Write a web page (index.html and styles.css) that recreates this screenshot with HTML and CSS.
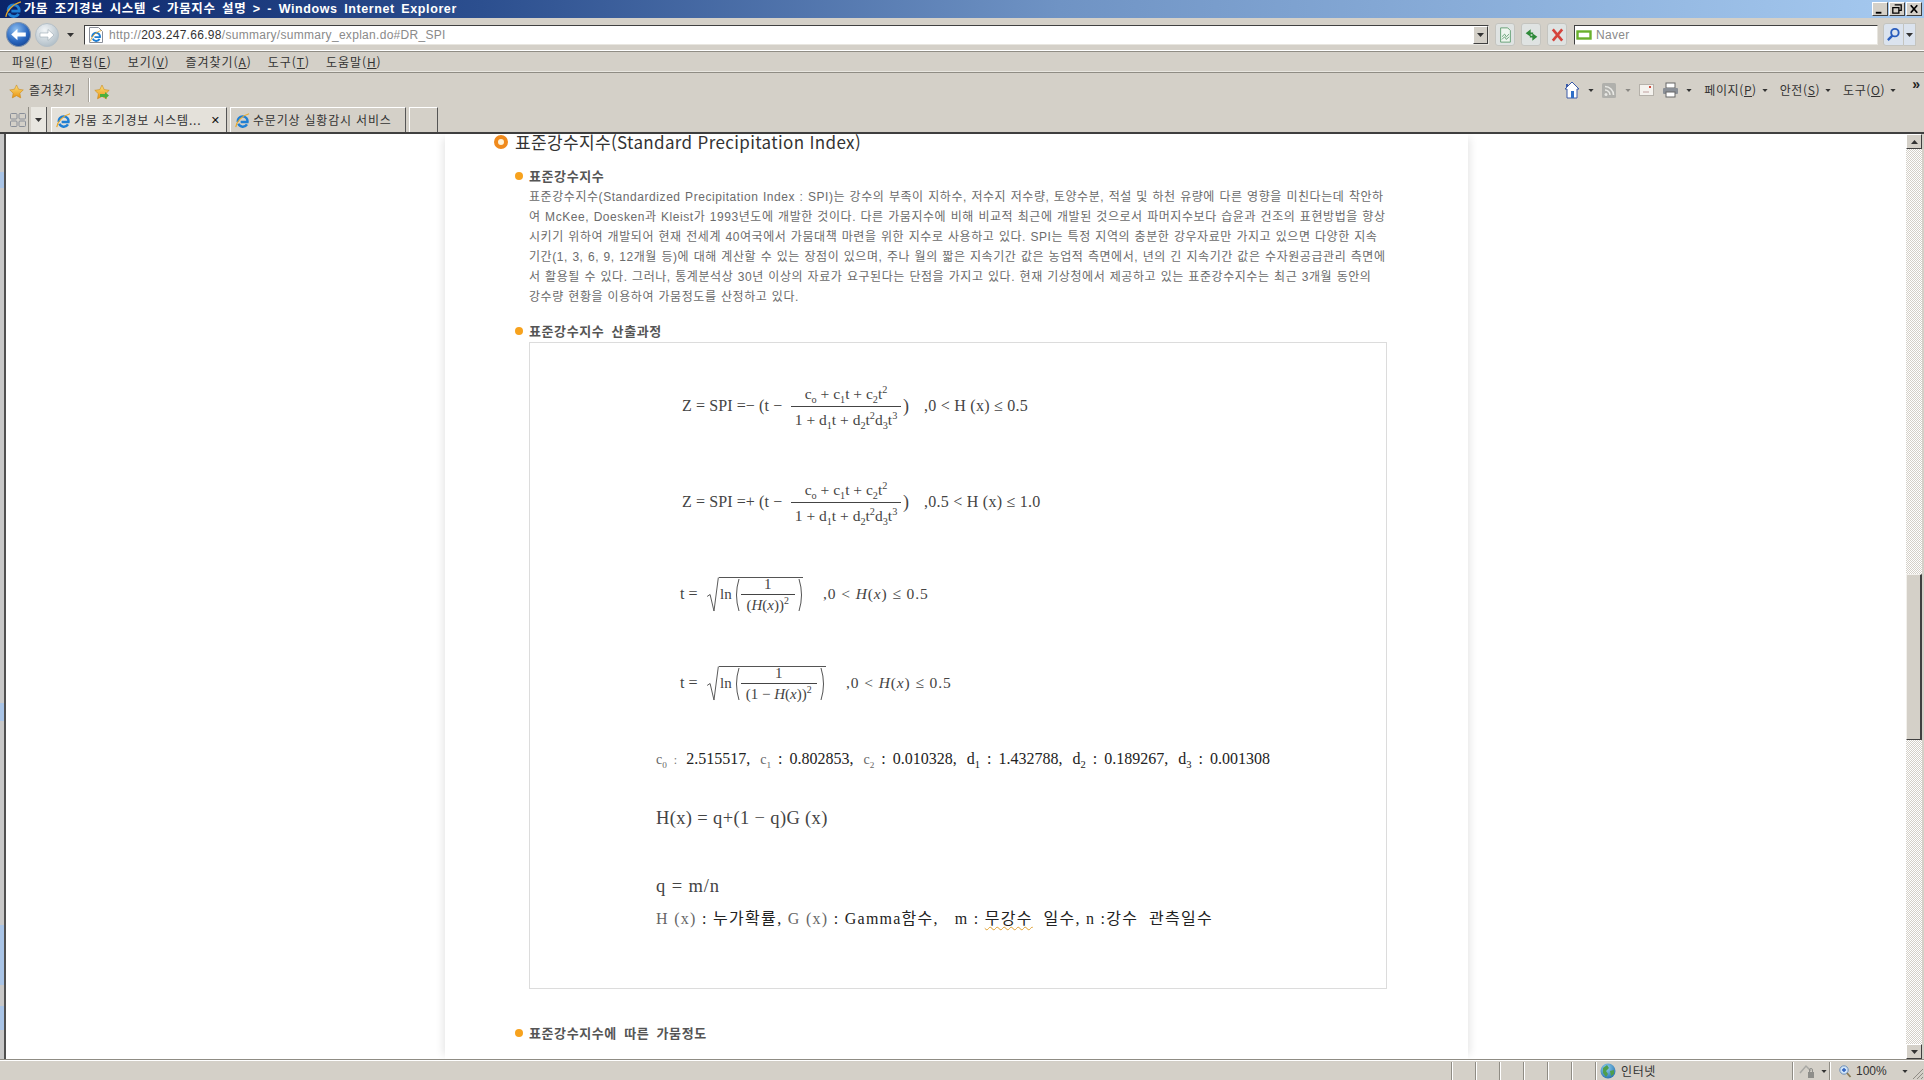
FILE: index.html
```html
<!DOCTYPE html>
<html lang="ko">
<head>
<meta charset="utf-8">
<title>가뭄 조기경보 시스템 &lt; 가뭄지수 설명 &gt; - Windows Internet Explorer</title>
<link rel="stylesheet" href="styles.css">
</head>
<body>
<svg class="defs" width="0" height="0" aria-hidden="true">
  <defs>
    <linearGradient id="gStar" x1="0" y1="0" x2="0" y2="1"><stop offset="0" stop-color="#ffe27a"/><stop offset="1" stop-color="#e8920f"/></linearGradient>
    <radialGradient id="gBack" cx=".4" cy=".3" r=".8"><stop offset="0" stop-color="#8fc0f0"/><stop offset=".6" stop-color="#2a68c0"/><stop offset="1" stop-color="#123f8c"/></radialGradient>
    <radialGradient id="gFwd" cx=".4" cy=".3" r=".8"><stop offset="0" stop-color="#f2f5f7"/><stop offset="1" stop-color="#a9b8c2"/></radialGradient>
    <radialGradient id="gGlobe" cx=".4" cy=".3" r=".8"><stop offset="0" stop-color="#8fd0f0"/><stop offset="1" stop-color="#1f6aa8"/></radialGradient>
    <symbol id="ie" viewBox="0 0 16 16">
      <path d="M3 9.500a5.200 5.200 0 1 1 10.300 0H6M3.600 11.500a5.200 5.200 0 0 0 9.200.6" fill="none" stroke="#1f7fd4" stroke-width="2.600"/>
      <path d="M.8 15C1.500 9 8 2.500 15 .8" fill="none" stroke="#e8a92a" stroke-width="1.200"/>
    </symbol>
    <symbol id="star" viewBox="0 0 16 16">
      <path d="M8 1l2.200 4.600 5 .7-3.600 3.500.9 5L8 12.400l-4.500 2.400.9-5L.8 6.300l5-.7z" fill="url(#gStar)" stroke="#c98a1a" stroke-width=".6"/>
    </symbol>
    <symbol id="caret" viewBox="0 0 7 4"><path d="M0 0h7L3.500 4z" fill="#333"/></symbol>
  </defs>
</svg>

<div class="window">
  <header class="titlebar">
    <svg class="ico-title"><use href="#ie"/></svg>
    <span class="title-text">가뭄 조기경보 시스템 &lt; 가뭄지수 설명 &gt; - Windows Internet Explorer</span>
    <div class="win-btns">
      <span class="win-btn"><svg viewBox="0 0 15 12"><path d="M3 9h6v2H3z" fill="#000"/></svg></span>
      <span class="win-btn"><svg viewBox="0 0 15 12"><path d="M5 1.500h7v6h-2M3 4.500h6.500v6H3z" fill="none" stroke="#000" stroke-width="1.400"/></svg></span>
      <span class="win-btn"><svg viewBox="0 0 15 12"><path d="M4 2l7 8M11 2l-7 8" stroke="#000" stroke-width="1.800"/></svg></span>
    </div>
  </header>

  <div class="addressrow">
    <svg class="nav-btn" viewBox="0 0 24 24"><circle cx="12" cy="12" r="11.500" fill="url(#gBack)" stroke="#7f93ad"/><path d="M5 12l6-5.500V10h8v4h-8v3.500z" fill="#fff"/></svg>
    <svg class="nav-btn nav-fwd" viewBox="0 0 24 24"><circle cx="12" cy="12" r="11.500" fill="url(#gFwd)" stroke="#b5bfc6"/><path d="M19 12l-6-5.500V10H5v4h8v3.500z" fill="#fff" stroke="#9aa8b2" stroke-width=".6"/></svg>
    <svg class="nav-caret"><use href="#caret"/></svg>
    <div class="addressbox">
      <svg class="ico-page" viewBox="0 0 14 16"><path d="M.5.5h9l4 4v11H.5z" fill="#fff" stroke="#8a8f99"/><use href="#ie" x="1" y="3" width="12" height="12"/></svg>
      <span class="url"><span class="url-dim">http://</span>203.247.66.98<span class="url-dim">/summary/summary_explan.do#DR_SPI</span></span>
      <span class="combo-btn"><svg class="combo-caret"><use href="#caret"/></svg></span>
    </div>
    <span class="tool-btn"><svg viewBox="0 0 16 18"><path d="M2.500 1h8l3 3v13h-11z" fill="#eef5ee" stroke="#5d9c6d"/><path d="M4 11l3-3 2 3 3-3M4 14l3-3 2 3 3-3" fill="none" stroke="#5d9c6d"/></svg></span>
    <span class="tool-btn"><svg viewBox="0 0 18 18"><path d="M8 2L2 7l6 4V8h3V6H8zM10 16l6-5-6-4v3H7v2h3z" fill="#2f8a3a"/></svg></span>
    <span class="tool-btn"><svg viewBox="0 0 16 16"><path d="M3 2l10 12M13 2L3 14" stroke="#d5443c" stroke-width="2.800"/></svg></span>
    <div class="searchbox">
      <svg class="ico-naver" viewBox="0 0 16 12"><rect x="1.500" y="2.500" width="13" height="7" fill="#fff" stroke="#6ab02c" stroke-width="2.400"/></svg>
      <span class="search-text">Naver</span>
    </div>
    <span class="search-btn"><svg viewBox="0 0 16 16"><circle cx="9.500" cy="6" r="4" fill="none" stroke="#2a5dbd" stroke-width="2"/><path d="M7 9l-5 5" stroke="#2a5dbd" stroke-width="2.500"/></svg></span>
    <span class="search-drop"><svg class="combo-caret"><use href="#caret"/></svg></span>
  </div>

  <nav class="menubar">
    <span>파일(<u>F</u>)</span><span>편집(<u>E</u>)</span><span>보기(<u>V</u>)</span><span>즐겨찾기(<u>A</u>)</span><span>도구(<u>T</u>)</span><span>도움말(<u>H</u>)</span>
  </nav>

  <div class="favrow">
    <svg class="ico-star"><use href="#star"/></svg>
    <span class="fav-label">즐겨찾기</span>
    <span class="fav-sep"></span>
    <svg class="ico-star2" viewBox="0 0 16 16"><use href="#star"/><path d="M6 10h5V8l4 3.500-4 3.500v-2H6z" fill="#4caf3c"/></svg>
    <div class="cmdbar">
      <svg class="cmd-home" viewBox="0 0 16 18"><path d="M8 1L1 8h2v9h10V8h2z" fill="#fff" stroke="#3a5aa8"/><path d="M3 3v3" stroke="#3a5aa8" stroke-width="2"/><rect x="7" y="10" width="3" height="7" fill="#2f6fc8"/></svg>
      <svg class="c1"><use href="#caret"/></svg>
      <svg class="cmd-rss" viewBox="0 0 14 15"><rect width="14" height="15" rx="1.500" fill="#b0b0ac"/><circle cx="4" cy="11.500" r="1.500" fill="#e8e8e4"/><path d="M3 7a5 5 0 0 1 5 5M3 3.500a8.500 8.500 0 0 1 8.500 8.500" fill="none" stroke="#e8e8e4" stroke-width="1.600"/></svg>
      <svg class="c2"><use href="#caret"/></svg>
      <svg class="cmd-mail" viewBox="0 0 15 12"><rect x=".5" y=".5" width="14" height="11" fill="#f4f2ee" stroke="#b5b1aa"/><path d="M4 8h6" stroke="#c0a0a0"/><rect x="10" y="2" width="2" height="2" fill="#d04a3a"/></svg>
      <svg class="cmd-print" viewBox="0 0 17 16"><rect x="4" y="1" width="9" height="5" fill="#fff" stroke="#666"/><rect x="1" y="6" width="15" height="6" rx="1" fill="#8a8f96"/><rect x="4" y="10" width="9" height="5" fill="#fff" stroke="#666"/></svg>
      <svg class="c3"><use href="#caret"/></svg>
      <span class="cmd-text">페이지(<u>P</u>)</span><svg class="c4"><use href="#caret"/></svg>
      <span class="cmd-text">안전(<u>S</u>)</span><svg class="c4"><use href="#caret"/></svg>
      <span class="cmd-text">도구(<u>O</u>)</span><svg class="c4"><use href="#caret"/></svg>
    </div>
    <span class="chevron">»</span>
  </div>

  <div class="tabrow">
    <span class="quick"><svg viewBox="0 0 16 14"><g fill="none" stroke="#8a8f99"><rect x=".5" y=".5" width="6.500" height="5.500" rx="1"/><rect x="9" y=".5" width="6.500" height="5.500" rx="1"/><rect x=".5" y="8" width="6.500" height="5.500" rx="1"/><rect x="9" y="8" width="6.500" height="5.500" rx="1"/></g></svg></span>
    <span class="quick-drop"><svg class="combo-caret"><use href="#caret"/></svg></span>
    <div class="tab tab-active">
      <svg class="ico-tab"><use href="#ie"/></svg>
      <span class="tab-text">가뭄 조기경보 시스템...</span>
      <span class="tab-x">✕</span>
    </div>
    <div class="tab">
      <svg class="ico-tab"><use href="#ie"/></svg>
      <span class="tab-text">수문기상 실황감시 서비스</span>
    </div>
    <div class="tab tab-new"></div>
  </div>

  <div class="viewport">
    <div class="desk-strip">
      <i class="s1"></i><i class="b1"></i><i class="s2"></i><i class="b2"></i><i class="s3"></i><i class="b3"></i><i class="s4"></i><i class="b4"></i>
    </div>
    <main class="pagearea">
      <article class="column">
        <h1 class="main-head"><span class="ring"></span>표준강수지수(Standard Precipitation Index)</h1>
        <section class="sec sec-first">
          <h2 class="sub-head">표준강수지수</h2>
          <p class="para">표준강수지수(Standardized Precipitation Index : SPI)는 강수의 부족이 지하수, 저수지 저수량, 토양수분, 적설 및 하천 유량에 다른 영향을 미친다는데 착안하<br>여 McKee, Doesken과 Kleist가 1993년도에 개발한 것이다. 다른 가뭄지수에 비해 비교적 최근에 개발된 것으로서 파머지수보다 습윤과 건조의 표현방법을 향상<br>시키기 위하여 개발되어 현재 전세계 40여국에서 가뭄대책 마련을 위한 지수로 사용하고 있다. SPI는 특정 지역의 충분한 강우자료만 가지고 있으면 다양한 지속<br>기간(1, 3, 6, 9, 12개월 등)에 대해 계산할 수 있는 장점이 있으며, 주나 월의 짧은 지속기간 값은 농업적 측면에서, 년의 긴 지속기간 값은 수자원공급관리 측면에<br>서 활용될 수 있다. 그러나, 통계분석상 30년 이상의 자료가 요구된다는 단점을 가지고 있다. 현재 기상청에서 제공하고 있는 표준강수지수는 최근 3개월 동안의<br>강수량 현황을 이용하여 가뭄정도를 산정하고 있다.</p>
        </section>
        <section class="sec sec-second">
          <h2 class="sub-head">표준강수지수 산출과정</h2>
          <div class="formula-box">
            <div class="row indent">
              <span class="lhs">Z = SPI =− (t −</span>
              <span class="frac frac-z"><span class="num">c<sub>o</sub> + c<sub>1</sub>t + c<sub>2</sub>t<sup>2</sup></span><span class="den">1 + d<sub>1</sub>t + d<sub>2</sub>t<sup>2</sup>d<sub>3</sub>t<sup>3</sup></span></span>
              <span class="close">)</span>
              <span class="cond">,0 &lt; H (x) ≤ 0.5</span>
            </div>
            <div class="row indent">
              <span class="lhs">Z = SPI =+ (t −</span>
              <span class="frac frac-z"><span class="num">c<sub>o</sub> + c<sub>1</sub>t + c<sub>2</sub>t<sup>2</sup></span><span class="den">1 + d<sub>1</sub>t + d<sub>2</sub>t<sup>2</sup>d<sub>3</sub>t<sup>3</sup></span></span>
              <span class="close">)</span>
              <span class="cond">,0.5 &lt; H (x) ≤ 1.0</span>
            </div>
            <div class="row indent">
              <span class="t-eq">t =</span>
              <svg class="radical" viewBox="0 0 12 36"><path d="M0 20l3-2 4 17L11.500 .5" fill="none" stroke="#555"/></svg>
              <span class="root root-a">
                <span class="ln">ln</span>
                <svg class="paren" viewBox="0 0 7 34"><path d="M6 1Q1 17 6 33" fill="none" stroke="#555"/></svg>
                <span class="frac frac-a"><span class="num">1</span><span class="den">(<i>H</i>(<i>x</i>))<sup>2</sup></span></span>
                <svg class="paren" viewBox="0 0 7 34"><path d="M1 1Q6 17 1 33" fill="none" stroke="#555"/></svg>
              </span>
              <span class="cond cond-a">,0 &lt; <i>H</i>(<i>x</i>) ≤ 0.5</span>
            </div>
            <div class="row indent">
              <span class="t-eq">t =</span>
              <svg class="radical" viewBox="0 0 12 36"><path d="M0 20l3-2 4 17L11.500 .5" fill="none" stroke="#555"/></svg>
              <span class="root root-b">
                <span class="ln">ln</span>
                <svg class="paren" viewBox="0 0 7 34"><path d="M6 1Q1 17 6 33" fill="none" stroke="#555"/></svg>
                <span class="frac frac-b"><span class="num">1</span><span class="den">(1 − <i>H</i>(<i>x</i>))<sup>2</sup></span></span>
                <svg class="paren" viewBox="0 0 7 34"><path d="M1 1Q6 17 1 33" fill="none" stroke="#555"/></svg>
              </span>
              <span class="cond cond-a">,0 &lt; <i>H</i>(<i>x</i>) ≤ 0.5</span>
            </div>
            <div class="row coef">
              <span class="pair"><span class="c-small">c<sub>0</sub></span><span class="colon-s">:</span>2.515517,</span>
              <span class="pair"><span class="c-small">c<sub>1</sub></span><span class="colon">:</span>0.802853,</span>
              <span class="pair"><span class="c-small">c<sub>2</sub></span><span class="colon">:</span>0.010328,</span>
              <span class="pair"><span class="key">d<sub>1</sub></span><span class="colon">:</span>1.432788,</span>
              <span class="pair"><span class="key">d<sub>2</sub></span><span class="colon">:</span>0.189267,</span>
              <span class="pair"><span class="key">d<sub>3</sub></span><span class="colon">:</span>0.001308</span>
            </div>
            <div class="row big">H(x) = q+(1 − q)G (x)</div>
            <div class="row big row-q">q = m/n</div>
            <div class="row legend"><span class="legend-line"><span class="dim">H (x)</span> : 누가확률, <span class="dim">G (x)</span> : <span class="latin">Gamma</span>함수,&nbsp;&nbsp; <span class="latin">m</span> : <span class="squiggle">무강수</span>&nbsp; 일수, <span class="latin">n</span> :강수&nbsp; 관측일수</span></div>
          </div>
        </section>
        <section class="sec sec-third">
          <h2 class="sub-head">표준강수지수에 따른 가뭄정도</h2>
        </section>
      </article>
    </main>
    <div class="scrollbar">
      <span class="sb-btn"><svg class="sb-up"><use href="#caret"/></svg></span>
      <span class="sb-track sb-upper"></span>
      <span class="sb-thumb"></span>
      <span class="sb-track sb-lower"></span>
      <span class="sb-btn"><svg class="combo-caret"><use href="#caret"/></svg></span>
    </div>
  </div>

  <footer class="statusbar">
    <span class="cell cell-main"></span>
    <span class="cell cell-s"></span><span class="cell cell-s"></span><span class="cell cell-s"></span><span class="cell cell-s"></span><span class="cell cell-s"></span><span class="cell cell-s"></span>
    <span class="cell cell-zone">
      <svg class="ico-globe" viewBox="0 0 16 16"><circle cx="8" cy="8" r="7.500" fill="url(#gGlobe)"/><path d="M3 5l4-3 2 3-3 3 2 3-2 3-3-4zM10 8l4-1 0 4-3 2z" fill="#4f9e4a"/></svg>
      <span class="zone-text">인터넷</span>
    </span>
    <span class="cell cell-lock">
      <svg class="ico-lock" viewBox="0 0 17 15"><path d="M1 9L7 2l5 5" fill="none" stroke="#a8a8a4" stroke-width="1.500"/><rect x="9" y="8" width="6" height="6" fill="#8e8e8a"/><path d="M10.500 8V6a1.500 1.500 0 0 1 3 0v2" fill="none" stroke="#8e8e8a"/></svg>
      <svg class="c5"><use href="#caret"/></svg>
    </span>
    <span class="cell cell-zoom">
      <svg class="ico-zoom" viewBox="0 0 12 13"><circle cx="5" cy="5" r="4.200" fill="#cfe3f7" stroke="#6f8fb5"/><path d="M3 5h4M5 3v4" stroke="#2a5dbd" stroke-width="1.400"/><path d="M8 8l3.500 4" stroke="#8a7a55" stroke-width="1.800"/></svg>
      <span class="zoom-text">100%</span>
      <svg class="c6"><use href="#caret"/></svg>
    </span>
    <svg class="grip" viewBox="0 0 14 14"><path d="M13 3L3 13M13 7l-6 6M13 11l-2 2" stroke="#8f8c84"/></svg>
  </footer>
</div>
</body>
</html>
```

FILE: styles.css
```css
* { box-sizing: border-box; }
html, body { margin: 0; padding: 0; }
body {
  width: 1924px;
  height: 1080px;
  overflow: hidden;
  background: #d4d0c8;
  font-family: "Noto Sans CJK KR", "Liberation Sans", sans-serif;
  font-size: 12px;
  color: #333;
}
.defs { position: absolute; }
svg { display: block; flex: none; overflow: visible; }

.window { display: flex; flex-direction: column; width: 1924px; height: 1080px; }

/* title bar */
.titlebar {
  height: 18px;
  display: flex;
  align-items: center;
  padding-left: 5px;
  background: linear-gradient(90deg, #0a246a 0%, #2c4f8f 25%, #6f93c4 55%, #a6caf0 100%);
  flex: none;
}
.ico-title { width: 17px; height: 17px; }
.title-text {
  margin-left: 2px;
  color: #fff;
  font: 700 12.500px/18px "Liberation Sans", "Noto Sans CJK KR", sans-serif;
  letter-spacing: .6px;
  word-spacing: 2.500px;
  white-space: nowrap;
}
.win-btns { margin-left: auto; margin-right: 2px; display: flex; gap: 1px; }
.win-btn {
  width: 16px;
  height: 14px;
  background: #d4d0c8;
  border: 1px solid;
  border-color: #fff #404040 #404040 #fff;
  display: block;
}
.win-btn svg { width: 14px; height: 12px; }

/* address row */
.addressrow {
  height: 34px;
  flex: none;
  display: flex;
  align-items: center;
  padding: 0 6px 0 6px;
  border-bottom: 1px solid #8f8c84;
  box-shadow: inset 0 -1px 0 #fff;
}
.nav-btn { width: 25px; height: 25px; }
.nav-fwd { margin-left: 4px; width: 24px; height: 24px; }
.nav-caret { width: 7px; height: 4px; margin-left: 8px; }
.addressbox {
  width: 1405px;
  height: 20px;
  margin-left: 10px;
  background: #fff;
  border: 1px solid;
  border-color: #404040 #e8e6e0 #e8e6e0 #404040;
  display: flex;
  align-items: center;
  padding-left: 4px;
}
.ico-page { width: 14px; height: 16px; }
.url {
  margin-left: 6px;
  font: 12px/18px "Liberation Sans", sans-serif;
  letter-spacing: .3px;
  color: #333;
}
.url-dim { color: #8a8a8a; }
.combo-btn {
  margin-left: auto;
  width: 15px;
  height: 18px;
  background: #d4d0c8;
  border: 1px solid;
  border-color: #fff #404040 #404040 #fff;
  display: flex;
  align-items: center;
  justify-content: center;
}
.combo-caret { width: 7px; height: 4px; }
.tool-btn {
  width: 20px;
  height: 23px;
  margin-left: 6px;
  background: #dfe3e2;
  border: 1px solid #c4c4bf;
  border-radius: 3px;
  display: flex;
  align-items: center;
  justify-content: center;
}
.tool-btn svg { width: 15px; height: 16px; }
.searchbox {
  width: 304px;
  height: 20px;
  margin-left: 7px;
  background: #fff;
  border: 1px solid;
  border-color: #404040 #e8e6e0 #e8e6e0 #404040;
  display: flex;
  align-items: center;
  padding-left: 1px;
}
.ico-naver { width: 16px; height: 12px; }
.search-text { margin-left: 4px; font: 12px "Liberation Sans", sans-serif; color: #8a8a8a; letter-spacing: .3px; }
.search-btn {
  width: 21px;
  height: 23px;
  margin-left: 5px;
  background: #dbe3ee;
  border: 1px solid #c4c4bf;
  border-radius: 3px 0 0 3px;
  display: flex;
  align-items: center;
  justify-content: center;
}
.search-btn svg { width: 15px; height: 15px; }
.search-drop {
  width: 12px;
  height: 23px;
  background: #dbe3ee;
  border: 1px solid #c4c4bf;
  border-left: 0;
  display: flex;
  align-items: center;
  justify-content: center;
}

/* menu */
.menubar {
  height: 21px;
  flex: none;
  display: flex;
  align-items: center;
  gap: 16px;
  padding-left: 12px;
  border-bottom: 1px solid #8f8c84;
  box-shadow: inset 0 -1px 0 #e8e6e0;
  line-height: 20px;
  letter-spacing: .95px;
  color: #333;
}

/* favourites row */
.favrow {
  height: 34px;
  flex: none;
  display: flex;
  align-items: flex-start;
  padding: 10px 4px 0 9px;
}
.ico-star { width: 15px; height: 15px; margin-top: 1px; }
.fav-label { margin-left: 5px; line-height: 14px; letter-spacing: .7px; }
.fav-sep { width: 2px; height: 24px; margin: -5px 0 0 12px; border-left: 1px solid #a8a49c; border-right: 1px solid #fff; }
.ico-star2 { width: 16px; height: 16px; margin: 1px 0 0 4px; }
.cmdbar { margin-left: auto; display: flex; align-items: center; height: 14px; }
.cmd-home { width: 16px; height: 18px; }
.cmdbar svg[class^="c"]:not([class^="cmd"]) { width: 6px; height: 3px; }
.c1 { margin-left: 8px; }
.cmd-rss { width: 14px; height: 15px; margin-left: 8px; }
.c2 { margin-left: 9px; opacity: .45; }
.cmd-mail { width: 15px; height: 12px; margin-left: 8px; }
.cmd-print { width: 17px; height: 16px; margin-left: 8px; }
.c3 { margin-left: 7px; }
.cmd-text { margin-left: 12px; line-height: 14px; letter-spacing: .6px; }
.c4 { margin-left: 5px; }
.chevron { margin: -6px 0 0 16px; font: 700 14px/14px "Liberation Sans", sans-serif; color: #222; }

/* tabs */
.tabrow {
  height: 25px;
  flex: none;
  display: flex;
  align-items: flex-end;
  padding-left: 8px;
}
.quick { width: 21px; height: 25px; display: flex; align-items: center; justify-content: center; border-right: 1px solid #8f8c84; }
.quick svg { width: 16px; height: 14px; }
.quick-drop { width: 16px; height: 25px; margin-left: 2px; display: flex; align-items: center; justify-content: center; background: #e8e6e0; border-right: 1px solid #555; }
.tab {
  width: 176px;
  height: 25px;
  margin-left: 4px;
  display: flex;
  align-items: center;
  padding-left: 4px;
  border: 1px solid;
  border-color: #fff #555 transparent #fff;
  border-bottom: 0;
}
.tab + .tab { margin-left: 3px; }
.tab-active { background: #e4e1da; }
.tab-new { width: 29px; }
.ico-tab { width: 15px; height: 15px; }
.tab-text { margin-left: 3px; line-height: 20px; white-space: nowrap; color: #333; letter-spacing: .8px; }
.tab-x { margin-left: auto; margin-right: 6px; font: 700 11px "DejaVu Sans", sans-serif; color: #111; }

/* page viewport */
.viewport {
  flex: 1;
  display: flex;
  min-height: 0;
  border-top: 2px solid #404040;
  padding-right: 2px;
}
.desk-strip {
  width: 6px;
  flex: none;
  border-right: 2px solid #505050;
  display: flex;
  flex-direction: column;
  background: #c8c8c8;
}
.desk-strip i { display: block; flex: none; }
.s1 { height: 38px; }
.b1 { height: 16px; background: #a9c4e6; }
.s2 { height: 515px; }
.b2 { height: 18px; background: #a9c4e6; }
.s3 { height: 204px; }
.b3 { height: 60px; background: #a9c4e6; }
.s4 { height: 21px; }
.b4 { height: 24px; background: #a9c4e6; }

.pagearea { flex: 1; min-width: 0; background: #fff; }
.column {
  width: 1023px;
  height: 100%;
  margin-left: 439px;
  background: #fff;
  box-shadow: -6px 0 8px -4px rgba(0,0,0,.1), 6px 0 8px -4px rgba(0,0,0,.1);
}
.main-head {
  margin: 0;
  height: 19px;
  display: flex;
  align-items: center;
  gap: 7px;
  padding: 0 0 3px 50px;
  font-size: 17px;
  font-weight: 400;
  line-height: 16px;
  letter-spacing: .35px;
  color: #333;
  white-space: nowrap;
}
.ring {
  width: 14px;
  height: 14px;
  border-radius: 50%;
  border: 4px solid #f08a1c;
  background: #fff3d8;
  flex: none;
  margin: -1px 0 0 -1px;
}
.sec { padding-left: 84px; }
.sec-first { margin-top: 13px; }
.sec-second { margin-top: 14px; }
.sec-third { margin-top: 34px; }
.sub-head {
  margin: 0 0 0 -14px;
  height: 20px;
  display: flex;
  align-items: center;
  gap: 6px;
  font-size: 13px;
  font-weight: 700;
  line-height: 18px;
  padding-bottom: 1px;
  letter-spacing: .6px;
  word-spacing: 3px;
  color: #555;
  white-space: nowrap;
}
.sub-head::before {
  content: "";
  width: 8px;
  height: 8px;
  border-radius: 50%;
  background: #f7a21d;
  flex: none;
}
.para {
  margin: 0;
  padding-top: 1px;
  font-family: "Liberation Sans", "Noto Sans CJK KR", sans-serif;
  font-size: 12px;
  line-height: 20px;
  letter-spacing: .56px;
  word-spacing: .6px;
  color: #6b6b6b;
  white-space: nowrap;
}

/* formula image */
.formula-box {
  margin-top: 1px;
  width: 858px;
  height: 647px;
  border: 1px solid #dcdcdc;
  padding: 15px 0 0 126px;
  display: grid;
  grid-template-rows: 96px 96px 88px 90px 62px 56px 58px 32px;
  font-family: "Liberation Serif", "Noto Sans CJK KR", serif;
  font-size: 16px;
  color: #444;
}
.row { display: flex; align-items: center; white-space: nowrap; }
.indent { margin-left: 26px; }
sub, sup { font-size: 66%; line-height: 0; }
.lhs { width: 109px; letter-spacing: .1px; }
.frac { display: inline-flex; flex-direction: column; align-items: center; flex: none; line-height: 21px; }
.num { display: block; width: 100%; text-align: center; border-bottom: 1px solid #444; padding-bottom: 2px; }
.den { display: block; width: 100%; text-align: center; padding-top: 2px; }
.frac-z { width: 110px; font-size: 15.500px; }
.close { margin-left: 2px; font-size: 18px; }
.cond { margin-left: 15px; letter-spacing: .25px; }
.t-eq { width: 27px; margin-left: -2px; }
.radical { width: 12px; height: 35px; }
.root {
  height: 35px;
  display: flex;
  align-items: center;
  border-top: 1px solid #555;
  font-size: 15px;
}
.root-a { width: 84px; }
.root-b { width: 107px; }
.paren { width: 7px; height: 34px; }
.ln { margin-left: 1px; margin-right: 1px; }
.frac-a { width: 54px; margin: 0 3px 0 1px; line-height: 16px; }
.frac-b { width: 76px; margin: 0 3px 0 1px; line-height: 16px; }
.cond-a { margin-left: 20px; font-size: 15.500px; letter-spacing: .9px; }
.coef { font-size: 16px; gap: 10px; color: #222; }
.pair { display: inline-flex; align-items: baseline; }
.key { font-size: 16px; }
.colon { margin: 0 7px; }
.colon-s { margin: 0 9px 0 7px; color: #777; font-size: 12px; }
.c-small { color: #666; font-size: 14px; }
.big { font-size: 18.500px; color: #444; letter-spacing: .35px; }
.row-q { padding-top: 22px; letter-spacing: .9px; }
.legend { font-size: 16px; color: #222; letter-spacing: 1.300px; padding-bottom: 6px; }
.latin { letter-spacing: 1.200px; }
.dim { color: #666; }
.squiggle { text-decoration: underline wavy #e0a030 1px; text-underline-offset: 2px; }

/* scrollbar */
.scrollbar { width: 16px; flex: none; display: flex; flex-direction: column; background: #fff; }
.sb-btn {
  height: 15px;
  flex: none;
  background: #d4d0c8;
  border: 1px solid;
  border-color: #fff #404040 #404040 #fff;
  display: flex;
  align-items: center;
  justify-content: center;
}
.sb-up { width: 7px; height: 4px; transform: rotate(180deg); }
.sb-track {
  display: block;
  background: repeating-conic-gradient(#d4d0c8 0 25%, #fff 0 50%) 0 0 / 2px 2px;
}
.sb-upper { height: 425px; flex: none; margin-top: 0; }
.sb-thumb {
  height: 166px;
  flex: none;
  background: #d4d0c8;
  border: 1px solid;
  border-color: #f2f0ec #404040 #404040 #f2f0ec;
  border-right-width: 2px;
}
.sb-lower { flex: 1; }

/* status bar */
.statusbar {
  height: 21px;
  flex: none;
  display: flex;
  align-items: stretch;
  border-top: 1px solid #8f8c84;
  box-shadow: inset 0 1px 0 #fff;
  padding: 2px 0 0 6px;
  line-height: 18px;
}
.cell { display: flex; align-items: center; flex: none; border-right: 1px solid #8f8c84; box-shadow: 1px 0 0 #fff; }
.cell-main { width: 1446px; }
.cell-s { width: 24px; }
.cell-zone { width: 197px; padding-left: 4px; gap: 5px; color: #333; font-size: 12px; }
.zone-text { letter-spacing: .6px; }
.ico-globe { width: 16px; height: 16px; }
.cell-lock { width: 37px; padding-left: 6px; }
.ico-lock { width: 17px; height: 15px; }
.c5 { width: 6px; height: 3px; margin-left: 5px; }
.cell-zoom { width: 70px; padding-left: 9px; border-right: 0; box-shadow: none; }
.ico-zoom { width: 12px; height: 13px; }
.zoom-text { margin-left: 5px; font: 12px "Liberation Sans", sans-serif; }
.c6 { width: 6px; height: 3px; margin-left: 15px; }
.grip { width: 14px; height: 14px; margin: auto 0 0 10px; }
```
